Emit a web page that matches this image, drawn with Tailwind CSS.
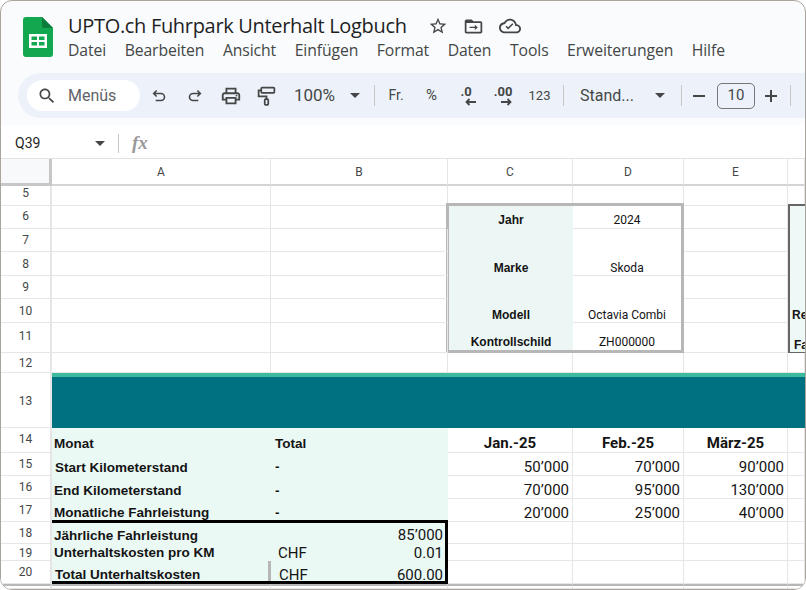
<!DOCTYPE html>
<html lang="de">
<head>
    <meta charset="UTF-8">
    <title>UPTO.ch Fuhrpark Unterhalt Logbuch</title>
    <script src="https://cdn.jsdelivr.net/npm/@tailwindcss/browser@4"></script>
</head>
<body class="bg-white">
<div class="w-[806px] h-[590px] flex flex-col overflow-hidden rounded-xl border border-[#a9a59e] bg-[#f9fbfd] font-['Roboto',sans-serif] text-[#444746]">

    <!-- Title + menu -->
    <div class="h-[72px] shrink-0 flex">
        <svg class="ml-[22px] mt-[16px] w-[30px] h-[40px]" viewBox="0 0 30 40">
            <path d="M3 0H19L30 11V37a3 3 0 0 1-3 3H3a3 3 0 0 1-3-3V3a3 3 0 0 1 3-3z" fill="#11a84f"/>
            <path d="M19 0L30 11H21a2 2 0 0 1-2-2z" fill="#0a7d3a"/>
            <path d="M6 17H24V31H6zM8.500 19.500V23H14V19.500zM16 19.500V23H21.500V19.500zM8.500 25V28.500H14V25zM16 25V28.500H21.500V25z" fill="#fff" fill-rule="evenodd"/>
        </svg>
        <div class="ml-[15px] flex flex-col">
            <div class="flex items-center h-[24px] mt-[13px]">
                <span class="text-[20px] leading-[24px] text-[#1f1f1f] font-['Open_Sans',sans-serif] tracking-[-0.32px] w-[360px]">UPTO.ch Fuhrpark Unterhalt Logbuch</span>
                <svg class="w-[20px] h-[20px]" viewBox="0 0 24 24" fill="#444746"><path d="M22 9.240l-7.190-.620L12 2 9.190 8.630 2 9.240l5.460 4.730L5.820 21 12 17.270 18.180 21l-1.630-7.030L22 9.240zM12 15.400l-3.760 2.270 1-4.280-3.320-2.880 4.380-.380L12 6.100l1.710 4.040 4.380.380-3.320 2.880 1 4.280L12 15.400z"/></svg>
                <svg class="ml-[15px] w-[21px] h-[21px]" viewBox="0 0 24 24" fill="#444746"><path d="M20 6h-8l-2-2H4c-1.100 0-2 .9-2 2v12c0 1.100.9 2 2 2h16c1.100 0 2-.9 2-2V8c0-1.100-.9-2-2-2zm0 12H4V8h16v10z"/><path d="M7.500 12.200h6V10l3.500 3-3.500 3v-2.200h-6z"/></svg>
                <svg class="ml-[15px] w-[22px] h-[22px]" viewBox="0 0 24 24" fill="#444746"><path d="M19.350 10.040C18.670 6.590 15.640 4 12 4 9.110 4 6.600 5.640 5.350 8.040 2.340 8.360 0 10.910 0 14c0 3.310 2.690 6 6 6h13c2.760 0 5-2.240 5-5 0-2.640-2.050-4.780-4.650-4.960zM19 18H6c-2.210 0-4-1.790-4-4 0-2.050 1.530-3.760 3.560-3.970l1.070-.11.500-.95C8.080 7.140 9.940 6 12 6c2.620 0 4.880 1.860 5.390 4.430l.3 1.500 1.530.11c1.560.1 2.780 1.410 2.780 2.960 0 1.650-1.350 3-3 3zm-9-2.200l-2.900-2.900 1.200-1.200 1.700 1.700 4.500-4.500 1.200 1.200z"/></svg>
            </div>
            <div class="flex gap-[18.500px] text-[15.750px] leading-[24px] text-[#444746] font-['Open_Sans',sans-serif] tracking-[-0.1px]">
                <span>Datei</span><span>Bearbeiten</span><span>Ansicht</span><span>Einfügen</span><span>Format</span><span>Daten</span><span>Tools</span><span>Erweiterungen</span><span>Hilfe</span>
            </div>
        </div>
    </div>

    <!-- Toolbar -->
    <div class="h-[45px] shrink-0 ml-[17px] w-[830px] rounded-full bg-[#edf2fa] flex items-center pl-[9px] text-[#444746]">
        <div class="w-[113px] h-[31px] rounded-full bg-white flex items-center pl-[10px] shrink-0">
            <svg class="w-[20px] h-[20px] shrink-0" viewBox="0 0 24 24" fill="#444746"><path d="M15.500 14h-.79l-.28-.27C15.410 12.590 16 11.110 16 9.500 16 5.910 13.090 3 9.500 3S3 5.910 3 9.500 5.910 16 9.500 16c1.610 0 3.090-.59 4.230-1.570l.27.28v.79l5 4.990L20.490 19l-4.990-5zm-6 0C7.010 14 5 11.990 5 9.500S7.010 5 9.500 5 14 7.010 14 9.500 11.990 14 9.500 14z"/></svg>
            <span class="ml-[11px] text-[16px] text-[#5f6368]">Menüs</span>
        </div>
        <div class="w-[37px] flex justify-center"><svg class="w-[16px] h-[17px]" viewBox="0 0 24 24" fill="none" stroke="#444746" stroke-width="2.400"><path d="M8.500 4.500L4 9l4.500 4.500M4.500 9H15a5 5 0 0 1 0 10.500H7"/></svg></div>
        <div class="w-[36px] flex justify-center"><svg class="w-[16px] h-[17px]" viewBox="0 0 24 24" fill="none" stroke="#444746" stroke-width="2.400"><path d="M15.500 4.500L20 9l-4.500 4.500M19.500 9H9a5 5 0 0 0 0 10.500H17"/></svg></div>
        <div class="w-[36px] flex justify-center"><svg class="w-[22px] h-[22px]" viewBox="0 0 24 24" fill="#444746"><path d="M19 8h-1V3H6v5H5c-1.660 0-3 1.340-3 3v6h4v4h12v-4h4v-6c0-1.660-1.340-3-3-3zM8 5h8v3H8V5zm8 14H8v-4h8v4zm4-4h-2v-2H6v2H4v-4c0-.55.45-1 1-1h14c.55 0 1 .45 1 1v4z"/><circle cx="18" cy="11.500" r="1"/></svg></div>
        <div class="w-[35px] flex justify-center"><svg class="w-[21px] h-[22px]" viewBox="0 0 24 24" fill="none" stroke="#444746" stroke-width="2"><rect x="6" y="2.500" width="15" height="6" rx="1"/><path d="M6 5.500H3v7h9v3"/><rect x="10" y="15.500" width="4" height="6.500" rx="1"/></svg></div>
        <span class="w-[61px] text-center text-[17px]">100%</span>
        <div class="w-[20px] flex justify-center"><div class="border-x-[5px] border-t-[5px] border-x-transparent border-t-[#444746]"></div></div>
        <div class="w-[18px] flex justify-center"><div class="w-px h-[21px] bg-[#c7c7c7]"></div></div>
        <span class="w-[26px] text-center text-[14px]">Fr.</span>
        <span class="w-[45px] text-center text-[15px]">%</span>
        <div class="w-[25px] flex flex-col items-center leading-none">
            <span class="text-[13px] font-bold leading-[12px] -ml-px">.0</span>
            <svg class="w-[12px] h-[8px] ml-[8px]" viewBox="0 0 12 8" fill="none" stroke="#444746" stroke-width="1.800"><path d="M4.500 1L1.500 4l3 3M2 4h9"/></svg>
        </div>
        <div class="w-[48px] flex flex-col items-center leading-none">
            <span class="text-[13px] font-bold leading-[12px]">.00</span>
            <svg class="w-[12px] h-[8px] ml-[6px]" viewBox="0 0 12 8" fill="none" stroke="#444746" stroke-width="1.800"><path d="M7.500 1l3 3-3 3M10 4H1"/></svg>
        </div>
        <span class="w-[25px] text-center text-[13px]">123</span>
        <div class="w-[22px] flex justify-center"><div class="w-px h-[21px] bg-[#c7c7c7]"></div></div>
        <span class="w-[70px] pl-[6px] text-[16px]">Stand...</span>
        <div class="w-[32px] flex justify-center"><div class="border-x-[5px] border-t-[5px] border-x-transparent border-t-[#444746]"></div></div>
        <div class="w-[10px] flex justify-center"><div class="w-px h-[21px] bg-[#c7c7c7]"></div></div>
        <div class="w-[26px] flex justify-center"><div class="w-[12px] h-[2px] bg-[#444746]"></div></div>
        <div class="ml-[5px] w-[38px] h-[26px] rounded-[5px] border border-[#747775] flex items-center justify-center text-[15px]">10</div>
        <div class="w-[32px] flex justify-center text-[#444746]"><svg class="w-[14px] h-[14px]" viewBox="0 0 14 14" fill="#444746"><path d="M6 1h2v5h5v2H8v5H6V8H1V6h5z"/></svg></div>
        <div class="w-[6px] flex justify-center"><div class="w-px h-[21px] bg-[#c7c7c7]"></div></div>
    </div>

    <div class="h-[7px] shrink-0"></div>

    <!-- Formula bar -->
    <div class="h-[34px] shrink-0 bg-white flex items-center pt-[4px] text-[14px] border-b border-[#e1e3e1]">
        <span class="ml-[14px] w-[80px] text-[#1f1f1f]">Q39</span>
        <div class="border-x-[5px] border-t-[5px] border-x-transparent border-t-[#444746]"></div>
        <div class="ml-[13px] w-px h-[19px] bg-[#c7c7c7]"></div>
        <span class="ml-[13px] font-['Liberation_Serif',serif] italic font-bold text-[19px] text-[#999]">fx</span>
    </div>

    <!-- Sheet -->
    <div class="flex-1 min-h-0 bg-white grid grid-cols-[51px_219px_177px_125px_111px_104px_1fr] grid-rows-[27px_20px_23px_23px_24px_23px_24px_30px_20px_55px_25px_23px_23px_23px_22px_17px_23px_1fr] text-[12px] leading-[14px] text-[#141414] *:border-r *:border-b *:border-[#e6e6e6] *:flex *:items-center *:min-w-0 *:overflow-hidden *:whitespace-nowrap">
        <!-- Header -->
        <div class="bg-[#f8f9fa] border-r-[3px]! border-b-[3px]! border-[#c7c7c7]!"></div>
        <div class="justify-center text-[#444746] border-b-2! border-b-[#d4d4d4]!">A</div>
        <div class="justify-center text-[#444746] border-b-2! border-b-[#d4d4d4]!">B</div>
        <div class="justify-center text-[#444746] border-b-2! border-b-[#d4d4d4]!">C</div>
        <div class="justify-center text-[#444746] border-b-2! border-b-[#d4d4d4]!">D</div>
        <div class="justify-center text-[#444746] border-b-2! border-b-[#d4d4d4]!">E</div>
        <div class="border-b-2! border-b-[#d4d4d4]!"></div>

        <!-- 5 -->
        <div class="justify-center pb-[6px] text-[#444746] border-r-2!">5</div><div></div><div></div><div></div><div></div><div></div><div></div>

        <!-- 6 -->
        <div class="justify-center pb-[2px] text-[#444746] border-r-2!">6</div><div></div><div></div>
        <div class="col-span-2 row-span-6 grid! grid-cols-subgrid grid-rows-subgrid items-stretch! -mt-[3px] -ml-[2px] border-[3px]! border-[#b7b7b7]! font-['Liberation_Sans',sans-serif] text-[12px] bg-white">
            <div class="row-span-6 bg-[#ecf7f5] flex flex-col items-center font-bold">
                <span class="h-[23px] flex items-center pt-[5px]">Jahr</span>
                <span class="h-[47px] flex items-end pb-[1px]">Marke</span>
                <span class="h-[47px] flex items-end pb-[1px]">Modell</span>
                <span class="h-[27px] flex items-end pb-[1px]">Kontrollschild</span>
            </div>
            <div class="border-b border-[#e6e6e6] flex items-center justify-center font-['Roboto',sans-serif] pt-[5px]">2024</div>
            <div class="row-span-2 border-b border-[#e6e6e6] flex items-end justify-center font-['Roboto',sans-serif]">Skoda</div>
            <div class="row-span-2 border-b border-[#e6e6e6] flex items-end justify-center font-['Roboto',sans-serif]">Octavia Combi</div>
            <div class="flex items-end justify-center font-['Roboto',sans-serif] pb-[1px]">ZH000000</div>
        </div>
        <div></div>
        <div class="row-span-6 -mt-[2px] bg-[#eef8f6] border-l-2 border-t-2 border-b-2 border-r-0! border-[#666]! flex-col items-start! justify-end font-['Liberation_Sans',sans-serif] font-bold">
            <span class="pl-[2px] h-[14px] mb-[16px]">Restkilometer</span>
            <span class="pl-[4px] h-[14px]">Fahrzeug</span>
        </div>

        <!-- 7 -->
        <div class="justify-center text-[#444746] border-r-2!">7</div><div></div><div></div><div></div>
        <!-- 8 -->
        <div class="justify-center text-[#444746] border-r-2!">8</div><div></div><div></div><div></div>
        <!-- 9 -->
        <div class="justify-center text-[#444746] border-r-2!">9</div><div></div><div></div><div></div>
        <!-- 10 -->
        <div class="justify-center text-[#444746] border-r-2!">10</div><div></div><div></div><div></div>
        <!-- 11 -->
        <div class="justify-center pb-[4px] text-[#444746] border-r-2!">11</div><div></div><div></div><div></div>
        <!-- 12 -->
        <div class="justify-center text-[#444746] border-r-2!">12</div><div></div><div></div><div></div><div></div><div></div><div></div>

        <!-- 13 -->
        <div class="justify-center pt-[2px] text-[#444746] border-r-2!">13</div>
        <div class="col-span-6 bg-[#007180] border-0! border-t-4! border-t-[#3dbb9f]!"></div>

        <!-- 14 -->
        <div class="justify-center pb-[2px] text-[#444746] border-r-2!">14</div>
        <div class="bg-[#ebf9f4] border-0! pl-[2px] pt-[7px] font-['Liberation_Sans',sans-serif] font-bold text-[13.500px]">Monat</div>
        <div class="bg-[#ebf9f4] border-0! pl-[4px] pt-[7px] font-['Liberation_Sans',sans-serif] font-bold text-[13.500px]">Total</div>
        <div class="justify-center pt-[5px] font-bold text-[15px]">Jan.-25</div>
        <div class="justify-center pt-[5px] font-bold text-[15px]">Feb.-25</div>
        <div class="justify-center pt-[5px] font-bold text-[15px]">März-25</div>
        <div></div>

        <!-- 15 -->
        <div class="justify-center text-[#444746] border-r-2!">15</div>
        <div class="bg-[#ebf9f4] border-0! pl-[3px] pt-[6px] font-['Liberation_Sans',sans-serif] font-bold text-[13.500px]">Start Kilometerstand</div>
        <div class="bg-[#ebf9f4] border-0! pl-[4px] pt-[4px] font-['Liberation_Sans',sans-serif] font-bold text-[13.500px]">-</div>
        <div class="justify-end pr-[3px] pt-[6px] text-[15px]">50’000</div>
        <div class="justify-end pr-[3px] pt-[6px] text-[15px]">70’000</div>
        <div class="justify-end pr-[3px] pt-[6px] text-[15px]">90’000</div>
        <div></div>

        <!-- 16 -->
        <div class="justify-center text-[#444746] border-r-2!">16</div>
        <div class="bg-[#ebf9f4] border-0! pl-[2px] pt-[6px] font-['Liberation_Sans',sans-serif] font-bold text-[13.500px]">End Kilometerstand</div>
        <div class="bg-[#ebf9f4] border-0! pl-[4px] pt-[6px] font-['Liberation_Sans',sans-serif] font-bold text-[13.500px]">-</div>
        <div class="justify-end pr-[3px] pt-[6px] text-[15px]">70’000</div>
        <div class="justify-end pr-[3px] pt-[6px] text-[15px]">95’000</div>
        <div class="justify-end pr-[3px] pt-[6px] text-[15px]">130’000</div>
        <div></div>

        <!-- 17 -->
        <div class="justify-center text-[#444746] border-r-2!">17</div>
        <div class="bg-[#ebf9f4] border-0! pl-[2px] pt-[5px] font-['Liberation_Sans',sans-serif] font-bold text-[13.500px]">Monatliche Fahrleistung</div>
        <div class="bg-[#ebf9f4] border-0! pl-[4px] pt-[5px] font-['Liberation_Sans',sans-serif] font-bold text-[13.500px]">-</div>
        <div class="justify-end pr-[3px] pt-[6px] text-[15px]">20’000</div>
        <div class="justify-end pr-[3px] pt-[6px] text-[15px]">25’000</div>
        <div class="justify-end pr-[3px] pt-[6px] text-[15px]">40’000</div>
        <div></div>

        <!-- 18 - 20 -->
        <div class="justify-center text-[#444746] border-r-2!">18</div>
        <div class="col-span-2 row-span-3 grid! grid-cols-subgrid grid-rows-subgrid items-stretch! -mt-[2px] bg-[#ebf9f4] border-0! border-t-[3px]! border-r-[3px]! border-b-[3px]! border-black! text-[15px]">
            <div class="pl-[2px] pt-[5px] flex items-center font-['Liberation_Sans',sans-serif] font-bold text-[13.500px]">Jährliche Fahrleistung</div>
            <div class="pr-[2px] pt-[3px] flex items-center justify-end">85’000</div>
            <div class="pl-[2px] flex items-center font-['Liberation_Sans',sans-serif] font-bold text-[13.500px]">Unterhaltskosten pro KM</div>
            <div class="pl-[7px] pr-[2px] flex items-center justify-between"><span>CHF</span><span>0.01</span></div>
            <div class="pl-[3px] pt-[8px] flex items-center font-['Liberation_Sans',sans-serif] font-bold text-[13.500px]">Total Unterhaltskosten</div>
            <div class="pl-[8px] pr-[2px] pt-[7px] flex items-center justify-between border-l-[3px] border-[#b7b7b7] -ml-[3px]"><span>CHF</span><span>600.00</span></div>
        </div>
        <div></div><div></div><div></div><div></div>
        <div class="justify-center pt-[2px] text-[#444746] border-r-2!">19</div><div></div><div></div><div></div><div></div>
        <div class="justify-center text-[#444746] border-r-2!">20</div><div></div><div></div><div></div><div></div>

        <!-- 21 -->
        <div class="border-t-2 border-t-[#b7b7b7]! border-r-2!"></div>
        <div class="border-t-2 border-t-[#b7b7b7]!"></div>
        <div class="border-t-2 border-t-[#b7b7b7]!"></div>
        <div class="border-t-2 border-t-[#b7b7b7]!"></div>
        <div class="border-t-2 border-t-[#b7b7b7]!"></div>
        <div class="border-t-2 border-t-[#b7b7b7]!"></div>
        <div class="border-t-2 border-t-[#b7b7b7]!"></div>
    </div>
</div>
</body>
</html>
